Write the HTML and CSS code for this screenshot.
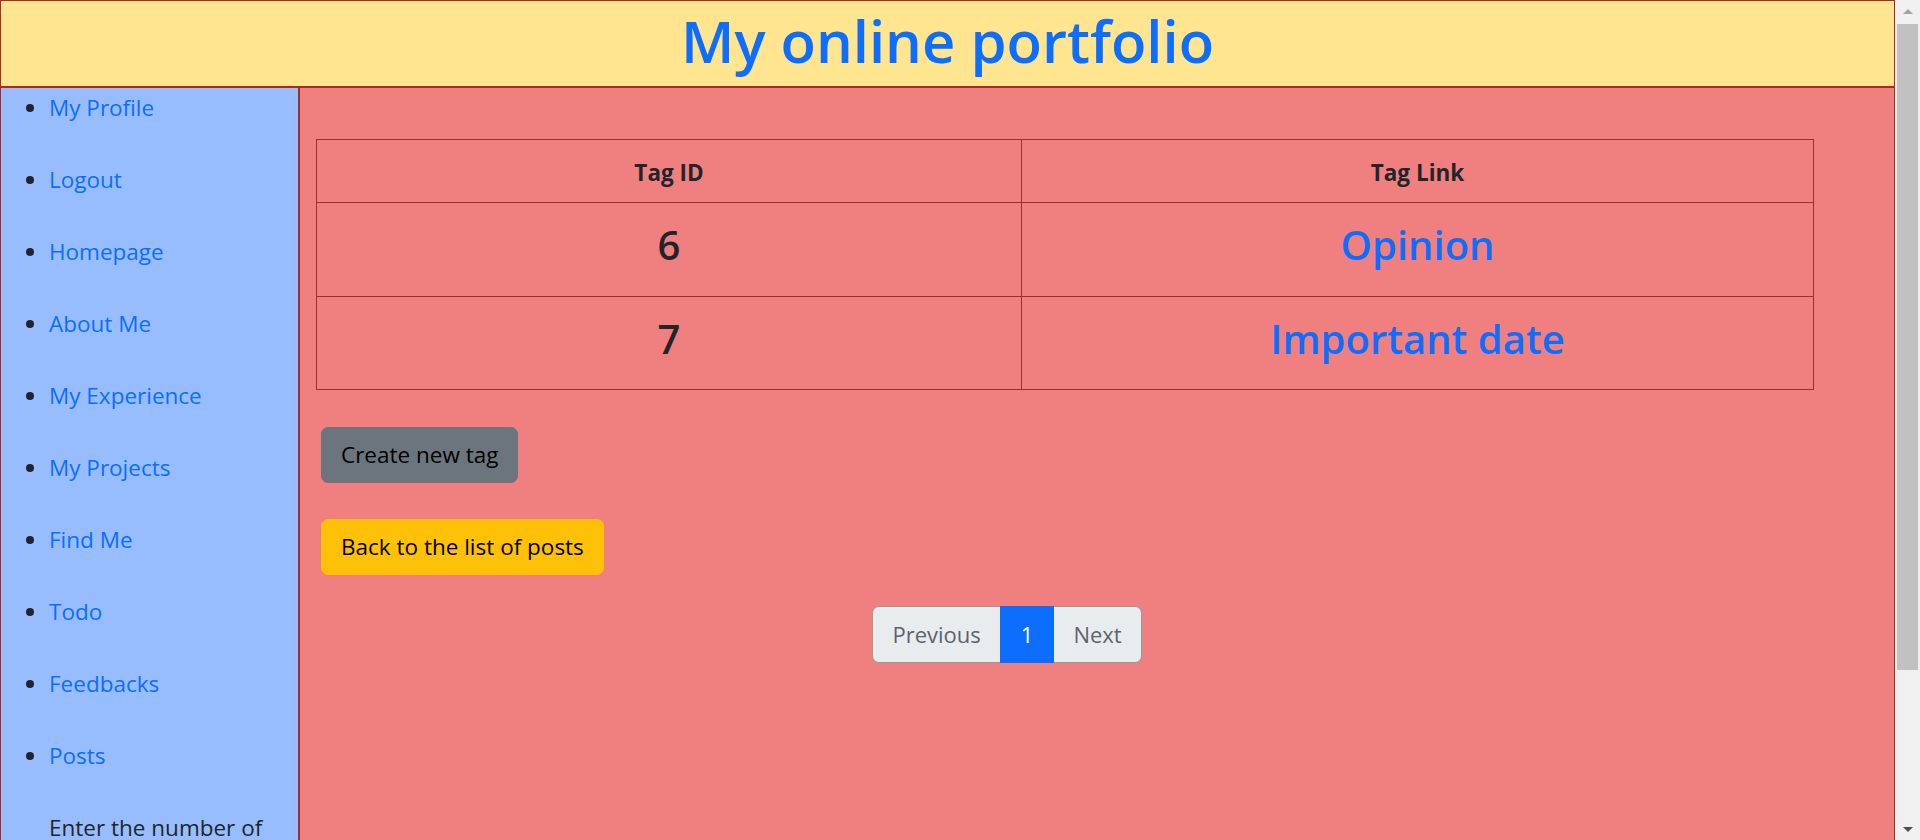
FILE: index.html
```html
<!DOCTYPE html>
<html lang="en">
<head>
<meta charset="utf-8">
<title>Tags - My online portfolio</title>
<link rel="stylesheet" href="styles.css">
</head>
<body>
<div class="page">
  <header class="site-header">
    <h1 class="site-title">My online portfolio</h1>
  </header>
  <div class="layout">
    <nav class="sidebar">
      <ul class="nav-list">
        <li><a href="#">My Profile</a></li>
        <li><a href="#">Logout</a></li>
        <li><a href="#">Homepage</a></li>
        <li><a href="#">About Me</a></li>
        <li><a href="#">My Experience</a></li>
        <li><a href="#">My Projects</a></li>
        <li><a href="#">Find Me</a></li>
        <li><a href="#">Todo</a></li>
        <li><a href="#">Feedbacks</a></li>
        <li><a href="#">Posts</a></li>
        <li class="form-item">
          <form class="per-page">
            <label class="per-page-label" for="perPage">Enter the number of posts per page:</label>
            <input class="per-page-input" id="perPage" type="number" value="2">
            <button class="per-page-btn" type="button">Submit</button>
          </form>
        </li>
      </ul>
    </nav>
    <main class="content">
      <table class="tag-table">
        <thead>
          <tr><th class="col-id">Tag ID</th><th>Tag Link</th></tr>
        </thead>
        <tbody>
          <tr><td>6</td><td><a href="#">Opinion</a></td></tr>
          <tr><td>7</td><td><a href="#">Important date</a></td></tr>
        </tbody>
      </table>
      <div class="actions">
        <a class="btn btn-secondary" href="#">Create new tag</a>
      </div>
      <div class="actions">
        <a class="btn btn-warning" href="#">Back to the list of posts</a>
      </div>
      <nav class="pager">
        <ul class="pagination">
          <li class="page-item"><span class="page-link">Previous</span></li>
          <li class="page-item active"><span class="page-link">1</span></li>
          <li class="page-item"><span class="page-link">Next</span></li>
        </ul>
      </nav>
    </main>
  </div>
</div>
<div class="scrollbar" aria-hidden="true">
  <div class="sb-btn sb-up"></div>
  <div class="sb-track"><div class="sb-thumb"></div></div>
  <div class="sb-btn sb-down"></div>
</div>
</body>
</html>
```
FILE: styles.css
```css
html {
  overflow: hidden;
}
body {
  margin: 0;
  display: flex;
  align-items: flex-start;
  font-family: "Open Sans", "Noto Sans", sans-serif;
  font-size: 22.5px;
  color: #212529;
  background: #ffffff;
}
a {
  color: #0d6efd;
  text-decoration: none;
}
.page {
  width: 1895px;
  flex: none;
}

/* header */
.site-header {
  box-sizing: border-box;
  height: 87px;
  border: 1px solid #a52a2a;
  background: #ffe590;
  text-align: center;
}
.site-title {
  margin: 0;
  font-size: 58px;
  font-weight: 600;
  line-height: 80px;
  color: #0d6efd;
}

/* layout */
.layout {
  display: flex;
  min-height: 950px;
}
.sidebar {
  box-sizing: border-box;
  width: 300px;
  flex: none;
  background: #98bdff;
  border-left: 1px solid #a52a2a;
  border-right: 2px solid #a52a2a;
  border-top: 1px solid #a52a2a;
}
.nav-list {
  margin: 0;
  padding: 3px 10px 0 48px;
}
.nav-list li {
  line-height: 34px;
  margin-bottom: 38px;
}
.nav-list li:last-child {
  margin-bottom: 0;
}
.nav-list .form-item {
  list-style: none;
  margin-top: 0;
}
.per-page {
  display: flex;
  flex-direction: column;
  gap: 10px;
}
.per-page-label {
  line-height: 34px;
}
.per-page-input {
  font: inherit;
  width: 180px;
  padding: 4px 10px;
  border: 1px solid #ced4da;
  border-radius: 6px;
}
.per-page-btn {
  align-self: flex-start;
  font: inherit;
  padding: 6px 16px;
  border: 0;
  border-radius: 7px;
  background: #0d6efd;
  color: #ffffff;
}

/* main */
.content {
  flex: 1;
  background: #f08080;
  border-top: 1px solid #a52a2a;
  border-right: 1px solid #a52a2a;
  padding: 51px 0 40px 16px;
}
.tag-table {
  width: 1498px;
  border-collapse: collapse;
  border: 1px solid #a52a2a;
}
.tag-table th,
.tag-table td {
  border: 1px solid #a52a2a;
  text-align: center;
  vertical-align: middle;
  padding: 0;
}
.tag-table .col-id {
  width: 705px;
}
.tag-table th {
  height: 63px;
  font-size: 22.5px;
  font-weight: 700;
  padding-top: 3px;
  box-sizing: border-box;
}
.tag-table td {
  height: 93.5px;
  font-size: 40px;
  font-weight: 600;
  line-height: 56px;
  padding-bottom: 8px;
  box-sizing: border-box;
}

.actions {
  margin: 37px 0 0 5px;
  display: flex;
}
.actions + .actions {
  margin-top: 36px;
}
.btn {
  display: inline-block;
  box-sizing: border-box;
  height: 56px;
  padding: 10px 19px;
  line-height: 34px;
  border: 1px solid transparent;
  border-radius: 7px;
  color: #000000;
  font-size: 22.5px;
}
.btn-secondary {
  background: #6c757d;
  border-color: #6c757d;
}
.btn-warning {
  background: #ffc107;
  border-color: #ffc107;
}

/* pagination */
.pager {
  margin: 31px 0 0 556px;
  display: flex;
}
.pagination {
  display: flex;
  margin: 0;
  padding: 0;
  list-style: none;
}
.page-link {
  display: block;
  box-sizing: border-box;
  height: 57px;
  padding: 10px 19.5px;
  line-height: 35px;
  font-size: 22px;
  color: #5c636a;
  background: #e9ecef;
  border: 1px solid #999999;
}
.page-item + .page-item .page-link {
  margin-left: -1px;
}
.page-item:first-child .page-link {
  border-radius: 7px 0 0 7px;
}
.page-item:last-child .page-link {
  border-radius: 0 7px 7px 0;
}
.page-item.active .page-link {
  background: #0d6efd;
  border-color: #0d6efd;
  color: #ffffff;
  position: relative;
  z-index: 1;
}

/* window scrollbar */
.scrollbar {
  width: 25px;
  height: 840px;
  flex: none;
  display: flex;
  flex-direction: column;
  background: #f0f0f0;
}
.sb-btn {
  height: 22px;
  display: flex;
  align-items: center;
  justify-content: center;
}
.sb-up::before,
.sb-down::before {
  content: "";
  width: 0;
  height: 0;
  border-left: 5px solid transparent;
  border-right: 5px solid transparent;
}
.sb-up::before {
  border-bottom: 5px solid #a3a3a3;
}
.sb-down::before {
  border-top: 5px solid #505050;
}
.sb-track {
  flex: 1;
  padding: 2px 2px 0;
}
.sb-thumb {
  height: 646px;
  background: #c1c1c1;
}
```
